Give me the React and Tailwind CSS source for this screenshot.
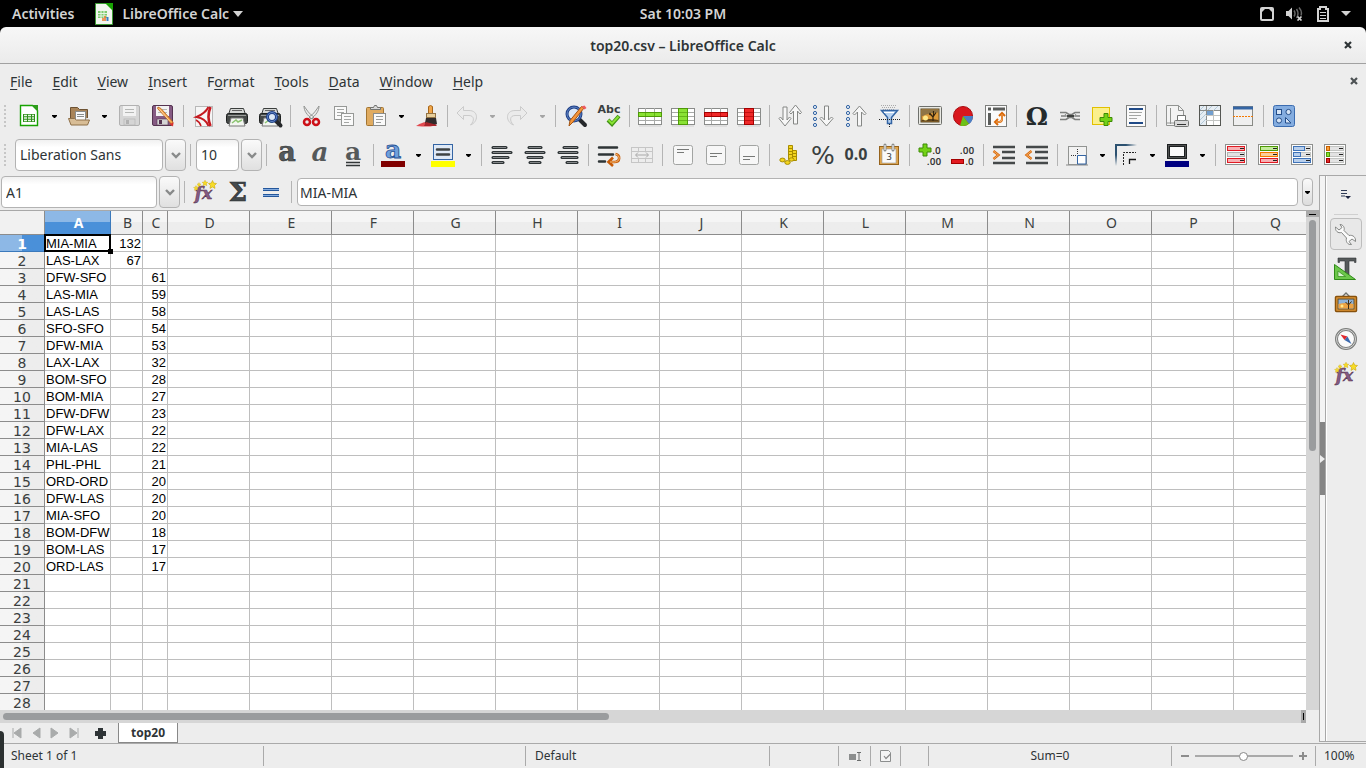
const UI = "font-['Noto_Sans','Open_Sans',sans-serif]";

/* ---------- shared icon parts ---------- */

const Svg = ({ size = 24, children }) => (
  <svg width={size} height={size} viewBox="0 0 24 24" fill="none" aria-hidden="true" className="shrink-0 overflow-visible">
    {children}
  </svg>
);

const Glyph = ({ x = 12, y = 18, s = 18, fill = '#3a3f40', font = 'DejaVu Sans', w = 'bold', ...rest }) => (
  <text x={x} y={y} fontSize={s} fill={fill} fontFamily={font} fontWeight={w} textAnchor="middle" {...rest} />
);

const Grid = ({ band, vertical, dark }) => (
  <Svg>
    <path d="M1 22h22" stroke="#cfcfcf" />
    <rect x=".5" y="4.5" width="23" height="16" fill="#fff" stroke="#8a8c8a" />
    <path d="M1 8.5h22M1 12.5h22M1 16.5h22M7.5 4v16M16.5 4v16" stroke="#a8aaa8" />
    {vertical ? (
      <>
        <rect x="7.5" y="4.5" width="9" height="16" fill={band} stroke={dark} />
        <path d="M8 8.5h8M8 12.5h8M8 16.5h8" stroke={dark} opacity=".6" />
      </>
    ) : (
      <>
        <rect x=".5" y="8.5" width="23" height="4" fill={band} stroke={dark} />
        <path d="M7.5 9v3M16.5 9v3" stroke={dark} opacity=".6" />
      </>
    )}
  </Svg>
);

const Lines = ({ rows }) => (
  <Svg>
    {rows.map(([x1, x2], i) => (
      <g key={i}>
        <path d={`M${x1} ${4.5 + i * 5}H${x2}`} stroke="#2e3436" strokeWidth="3" strokeLinecap="round" />
        <path d={`M${x1} ${4.5 + i * 5}H${x2}`} stroke="#85888a" strokeWidth="1" />
      </g>
    ))}
  </Svg>
);

const VAlign = ({ y }) => (
  <Svg>
    <rect x="2.5" y="2.5" width="19" height="19" rx="2" fill="#f7f7f7" stroke="#a2a4a2" />
    <path d={`M6 ${y}.5h12M6 ${y + 3}.5h7`} stroke="#777977" />
  </Svg>
);

const Dots = () => (
  <g stroke="#3465a4" fill="#e3ecf7">
    {[3, 9, 15, 21].map((cy) => <circle key={cy} cx="4" cy={cy} r="1.6" />)}
  </g>
);

const DownArrow = () => <path d="M13.5 2h4v14l3-3 1.500 1.500-6.500 7.500L9 14.500l1.500-1.500 3 3z" fill="#f7f7f7" stroke="#858785" />;
const UpArrow = () => <path d="M13.5 22h4V8l3 3L22 9.500 15.500 2 9 9.500l1.500 1.500 3-3z" fill="#f7f7f7" stroke="#858785" />;

const Floppy = ({ body, edge }) => (
  <>
    <rect x="1.5" y="1.5" width="20" height="20" rx="1.5" fill={body} stroke={edge} />
    <rect x="5" y="2" width="13" height="10" fill="#f2f2f2" />
    <path d="M7 5.5h9M7 8.5h9" stroke="#b5b7b5" />
    <rect x="6" y="15" width="11" height="6" fill="#d5d5d5" stroke={edge} strokeWidth=".6" />
    <rect x="8" y="16" width="3" height="4" fill={edge} />
  </>
);

const Pencil = () => (
  <>
    <path d="M6.500 4.500 17.500 16.500l3.500 5 1-3.500L10 4.500 7 3z" fill="#f5a04a" stroke="#b8651b" strokeWidth=".8" />
    <path d="m8 4.500 11 13" stroke="#fcd19c" />
    <path d="m18.500 20 3.500 2.500.6-4z" fill="#d93030" />
  </>
);

const Printer = () => (
  <>
    <path d="M5.500 4.500h13l2 6h-17z" fill="#d6d8d6" stroke="#3b3e3d" />
    <path d="M7 6.500h10" stroke="#666" />
    <rect x="1.500" y="9.500" width="21" height="10" rx="2" fill="#454947" stroke="#1e2120" />
    <path d="M3 11.500h18" stroke="#9b9d9b" />
    <path d="M6 14h12l2 8H4z" fill="#f3f6f1" stroke="#777" />
    <path d="m7 19 4-3 2 2 4-2" stroke="#8bc470" strokeWidth="1.500" />
  </>
);

const Lens = ({ x = 11, y = 10, r = 6 }) => (
  <>
    <path d={`m${x + r - 2} ${y + r - 2} 6 6`} stroke="#26282b" strokeWidth="4" strokeLinecap="round" />
    <circle cx={x} cy={y} r={r} fill="#dce8f6" stroke="#1e3f86" strokeWidth="3" />
    <circle cx={x} cy={y} r={r} stroke="#6286c6" strokeWidth="1" />
  </>
);

const Star = ({ x, y, s = 1 }) => (
  <path
    transform={`translate(${x} ${y}) scale(${s})`}
    d="m0-4 1.200 2.600 2.800.4-2 2 .5 2.900L0 2.500-2.500 3.900-2 1l-2-2 2.800-.4z"
    fill="#f7dc28"
    stroke="#c9a50c"
    strokeWidth=".6"
  />
);

const UndoShape = () => (
  <path d="M8.500 2.500 2 9l6.500 6.500v-4H14c5 0 6 5 1.500 9.500 8-3 8.500-14.500-1.500-14.500H8.500z" fill="#ebebeb" stroke="#cbcbcb" />
);

const Plus = ({ x, y, s = 1 }) => (
  <path transform={`translate(${x} ${y}) scale(${s})`} d="M4.500.5h4v4h4v4h-4v4h-4v-4h-4v-4h4z" fill="#73d216" stroke="#3d8a06" />
);

const Cond = ({ bars }) => (
  <Svg>
    <rect x="1.500" y="1.500" width="21" height="20" fill="#fdfdfd" stroke="#8e908e" />
    {bars.map(([stroke, fill, w], i) => (
      <g key={i}>
        <rect x="3.500" y={3.5 + i * 6} width="17" height="4" fill="#e3e3e3" stroke="#c2c4c2" />
        <rect x="3.500" y={3.5 + i * 6} width={w} height="4" fill={fill} stroke={stroke} />
        <path d={`M16 ${5.5 + i * 6}h4`} stroke="#222" />
      </g>
    ))}
  </Svg>
);

/* ---------- icons ---------- */

const icons = {
  new: (
    <Svg>
      <path d="M3.500 1.500h12l5 5v15h-17z" fill="#fff" stroke="#18a303" strokeWidth="1.400" />
      <path d="M15 1h6v6.500z" fill="#2e9c1c" />
      <rect x="6" y="10" width="12" height="8" fill="#2f8f1b" />
      <path d="M7 11.500h3m1 0h3m1 0h2M7 14h3m1 0h3m1 0h2M7 16.500h3m1 0h3m1 0h2" stroke="#e6f7e2" strokeWidth="1.300" />
    </Svg>
  ),
  open: (
    <Svg>
      <path d="M3.500 18V3.500h7l2 2h8V14" fill="#a98458" stroke="#6d5233" />
      <rect x="8.500" y="7.500" width="10" height="9" fill="#fafafa" stroke="#8b8d8b" />
      <path d="M10 10.500h7M10 12.500h7" stroke="#8b8d8b" />
      <path d="M1.500 14.500h6l2 1.500h13l-2 5H4z" fill="#d8bd96" stroke="#8f7049" />
    </Svg>
  ),
  save: <Svg><Floppy body="#d6d6d6" edge="#b1b1b1" /></Svg>,
  edit: <Svg><Floppy body="#855a83" edge="#553451" /><Pencil /></Svg>,
  pdf: (
    <Svg>
      <rect x="3.500" y="2.500" width="17" height="20" fill="#f6f6f6" stroke="#b8b8b8" />
      <path d="M16.500 3c-2.500 5-6 7.500-12 10 6 1 10 3.500 12 9" stroke="#c51a20" strokeWidth="2" />
      <path d="M18.500 3c-2.500 6-2.500 13 0 19" stroke="#c51a20" strokeWidth="2.600" />
      <path d="M9 22c-1-3-3-5-5-6" stroke="#c51a20" strokeWidth="1.500" />
    </Svg>
  ),
  print: <Svg><Printer /></Svg>,
  preview: <Svg><Printer /><Lens x={14} y={13} r={4.5} /></Svg>,
  cut: (
    <Svg>
      <path d="M5 2c0 5 3 9 8 13l2-2C10 10 8 6 5 2zM20 2c0 5-3 9-8 13l-2-2c5-3 7-7 10-11z" fill="#e8e8e8" stroke="#8b8d8b" strokeWidth=".9" />
      <circle cx="8" cy="18" r="3" stroke="#cc1018" strokeWidth="2.500" />
      <circle cx="17" cy="18" r="3" stroke="#cc1018" strokeWidth="2.500" />
    </Svg>
  ),
  copy: (
    <Svg>
      <rect x="2.500" y="2.500" width="12" height="13" fill="#fafafa" stroke="#969896" />
      <path d="M5 5.500h7M5 8.500h7M5 11.500h5" stroke="#a4a6a4" />
      <rect x="9.500" y="9.500" width="12" height="12" fill="#fafafa" stroke="#969896" />
      <path d="M12 12.500h7M12 15.500h7M12 18.500h5" stroke="#a4a6a4" />
    </Svg>
  ),
  paste: (
    <Svg>
      <rect x="2.500" y="3.500" width="17" height="18" rx="1" fill="#e0ab60" stroke="#a37532" />
      <path d="M6.500 5.500v-2h3l1-2h2l1 2h3v2z" fill="#d9d9d9" stroke="#717371" />
      <rect x="9.500" y="9.500" width="12" height="12" fill="#fafafa" stroke="#8b8d8b" />
      <path d="M12 12.500h7M12 15.500h7M12 18.500h5" stroke="#9b9d9b" />
    </Svg>
  ),
  brush: (
    <Svg>
      <path d="M1 22c5-3 8-4 10-4l10 2c-2 3-8 3-20 2z" fill="#e14a50" />
      <path d="M13.500 2.500q2-2 4 0V10h-4z" fill="#f0a64a" stroke="#a6661b" />
      <rect x="11.500" y="9.500" width="9" height="4" fill="#e8cf9c" stroke="#927346" />
      <path d="M11 14h10l1 6c-4 2-9 2-12-1z" fill="#312c2c" />
      <path d="m11 18 11 3-1 1H9z" fill="#a8242a" />
    </Svg>
  ),
  undo: <Svg><UndoShape /></Svg>,
  redo: <Svg><g transform="matrix(-1 0 0 1 24 0)"><UndoShape /></g></Svg>,
  find: (
    <Svg>
      <Lens x={10} y={10} r={7} />
      <path d="M20 4 9 18l-4 4 1-5.500L17.500 2.500z" fill="#f5953a" stroke="#a35412" />
      <path d="m17.500 2.500 3-1 2 2.500-2 1.500z" fill="#ee5b62" />
    </Svg>
  ),
  spell: (
    <Svg>
      <Glyph x={12} y={9} s={11}>Abc</Glyph>
      <path d="m11 16 4 4 7-8" stroke="#3f9113" strokeWidth="4" />
      <path d="m11.500 16 3.500 3.500 6.500-7" stroke="#8ae234" strokeWidth="2" />
    </Svg>
  ),
  rowIns: <Grid band="#8ae234" dark="#4e9a06" />,
  colIns: <Grid band="#8ae234" dark="#4e9a06" vertical />,
  rowDel: <Grid band="#ef2929" dark="#a40000" />,
  colDel: <Grid band="#ef2929" dark="#a40000" vertical />,
  sort: (
    <Svg>
      <path d="M5 3h4v13l2.500-3 1.500 1.500L7 22l-6-7.500L2.500 13 5 16z" fill="#f7f7f7" stroke="#858785" />
      <path d="M15.500 20h4V7l2.500 3 1.500-1.500L17.500 1l-6 7.500L13 10l2.500-3z" fill="#f7f7f7" stroke="#858785" />
    </Svg>
  ),
  sortDown: <Svg><Dots /><DownArrow /></Svg>,
  sortUp: <Svg><Dots /><UpArrow /></Svg>,
  filter: (
    <Svg>
      <path d="M4 1.500h16M5 3.500h14M6 5.500h12" stroke="#aaa" strokeDasharray="1 1" />
      <path d="M4.500 6.500h16l-6 7v6h-4v-6z" fill="#b9d3f1" stroke="#3465a4" strokeWidth="1.500" />
      <path d="M7 8.500h10" stroke="#fff" />
      <path d="M2 15.500h21M12.500 20v4" stroke="#222" strokeDasharray="1 1" />
    </Svg>
  ),
  image: (
    <Svg>
      <rect x=".5" y="2.500" width="23" height="18" rx="1" fill="#e9e9e3" stroke="#6e706c" />
      <rect x="3" y="5" width="18" height="13" fill="#dd9a3a" stroke="#5b4a2a" />
      <path d="M3.500 5.500h17v3q-9 0-17 4z" fill="#8f7446" />
      <path d="M3.500 16q8-2 17 0v1.500h-17z" fill="#5c421c" />
      <circle cx="7.500" cy="14" r="2.500" fill="#ffe88a" />
      <path d="M15 17v-4l-3.500-4M15 13l3-4.500M15.500 12V7M13 11l-2-1" stroke="#33240f" strokeWidth="1.200" />
    </Svg>
  ),
  chart: (
    <Svg>
      <circle cx="12" cy="12" r="9.500" fill="#d9171d" stroke="#a80c10" />
      <path d="M12 12h10a10 10 0 0 1-4 8z" fill="#4a7fc4" />
      <path d="m12 12 6 8a10 10 0 0 1-9 1.500z" fill="#6cc118" />
    </Svg>
  ),
  pivot: (
    <Svg>
      <rect x="1.500" y="1.500" width="21" height="21" fill="#fafafa" stroke="#7c7e7c" />
      <path d="M4 5h3M9 5h12M5.500 9v12" stroke="#5b5d5b" strokeWidth="3" />
      <path d="M18 9v6q0 3-3 3h-4M15 12l3-3 3 3M14 15l-3 3 3 3" stroke="#d96808" strokeWidth="2" />
      <path d="M18 10v5q0 3-3 3h-3" stroke="#fbc68b" strokeWidth=".7" />
    </Svg>
  ),
  omega: <Svg><Glyph y={21} s={25} fill="#252b2c" font="DejaVu Serif">Ω</Glyph></Svg>,
  link: (
    <Svg>
      <path d="M2 8.500h6l3 2h3l3-2h5M2 15.500h6l3-2h3l3 2h5M3 12h5M17 12h5" stroke="#7d7f7d" strokeWidth="1.600" />
      <path d="m7 10 3 4m8-4-3 4" stroke="#8b8d8b" />
      <path d="M9 12h7" stroke="#3f413f" strokeWidth="2" />
    </Svg>
  ),
  note: (
    <Svg>
      <rect x="1.500" y="3.500" width="17" height="17" fill="#fbf08c" stroke="#e2c000" />
      <Plus x={8.5} y={9} />
    </Svg>
  ),
  header: (
    <Svg>
      <rect x="2.500" y="1.500" width="19" height="21" fill="#fafafa" stroke="#828482" />
      <path d="M5 5h14M5 19h14" stroke="#204a87" strokeWidth="2" />
      <path d="M5 8.500h13M5 11.500h12M5 14.500h8" stroke="#a4a6a4" />
    </Svg>
  ),
  pages: (
    <Svg>
      <path d="M1.500 1.500h12l5 5v15h-17z" fill="#f3f3f3" stroke="#929492" />
      <path d="M13.500 1.500v5h5M5.500 4v16M2 19h12" stroke="#929492" />
      <path d="M12.500 11.500h8v5h-8z" fill="#fff" stroke="#727472" />
      <rect x="9.500" y="16.500" width="14" height="6" rx="1" fill="#d8d8d8" stroke="#727472" />
      <path d="M12 20.500h9" stroke="#333" />
    </Svg>
  ),
  freeze: (
    <Svg>
      <rect x="1.500" y="1.500" width="21" height="20" fill="#fff" stroke="#555753" />
      <path d="M2 2h20v4H8v15H2z" fill="#e6edf3" />
      <path d="m2 6 4-4M2 11l6-6M2 16l6-6M2 21l6-6M10 6l4-4M16 6l4-4" stroke="#b3c9d8" />
      <path d="M2 6.500h20M8.500 2v19" stroke="#8b8d8b" />
      <path d="M15.500 6v15M8 11.500h14M8 16.500h14" stroke="#c2c4c2" />
      <rect x="9" y="7" width="6" height="4" fill="#729fcf" />
      <rect x="1.500" y="1.500" width="21" height="20" stroke="#555753" />
    </Svg>
  ),
  split: (
    <Svg>
      <rect x="2.500" y="2.500" width="19" height="19" fill="#efefef" stroke="#888a85" />
      <path d="M2 4h20" stroke="#3465a4" strokeWidth="3" />
      <path d="M2 12.500h20" stroke="#f57900" strokeDasharray="2 1" />
    </Svg>
  ),
  shapes: (
    <Svg>
      <rect x="1.500" y="1.500" width="21" height="21" rx="2" fill="#84ade0" stroke="#3b6cb0" />
      <g fill="#d5e4f6" stroke="#244e8a">
        <rect x="4.500" y="5.500" width="5" height="5" />
        <circle cx="16.500" cy="8" r="2.600" />
        <circle cx="7" cy="16.500" r="2.600" />
        <path d="M13.500 13.500v5.500h5.500z" />
      </g>
    </Svg>
  ),
  bold: <Svg><Glyph x={12} y={18} s={27} fill="#55595a" stroke="#333738" strokeWidth=".6" font="DejaVu Serif">a</Glyph></Svg>,
  italic: <Svg><Glyph x={12} y={18} s={26} fill="#55595a" font="DejaVu Serif" fontStyle="italic">a</Glyph></Svg>,
  underline: (
    <Svg>
      <Glyph x={12} y={17} s={25} fill="#55595a" font="DejaVu Serif">a</Glyph>
      <path d="M5 19.500h14M5 22.500h14" stroke="#333738" strokeWidth="1.500" />
    </Svg>
  ),
  fontColor: (
    <Svg>
      <Glyph x={12} y={15} s={25} fill="#6f9fdc" stroke="#1f4f93" strokeWidth=".8" font="DejaVu Serif">a</Glyph>
      <path d="M0 18h24v6H0z" fill="#800000" />
    </Svg>
  ),
  highlight: (
    <Svg>
      <rect x="2.500" y="1.500" width="19" height="15" fill="#dfe9f6" stroke="#3465a4" />
      <path d="M6 6.500h12M6 11.500h12" stroke="#3e4243" strokeWidth="2.500" strokeLinecap="round" />
      <path d="M0 18h24v6H0z" fill="#ffff00" />
    </Svg>
  ),
  left: <Lines rows={[[3, 16], [3, 21], [3, 18], [3, 13]]} />,
  center: <Lines rows={[[6, 18], [3, 21], [5, 19], [7, 17]]} />,
  right: <Lines rows={[[8, 21], [3, 21], [6, 21], [11, 21]]} />,
  wrap: (
    <Svg>
      <path d="M2 4.500h18M2 11.500h14M2 18.500h6" stroke="#2e3436" strokeWidth="2.500" strokeLinecap="round" />
      <path d="M18.500 11c5 1 5 8-1 8H12m4-4.500L11.500 19l4.500 4" stroke="#c65a06" strokeWidth="2.600" />
      <path d="M18.500 11c5 1 5 8-1 8H13" stroke="#fcc27e" />
    </Svg>
  ),
  merge: (
    <Svg>
      <rect x="1.500" y="4.500" width="21" height="15" fill="#ededed" stroke="#c6c6c6" />
      <path d="M2 8.500h20M2 15.500h20M8.500 5v4M15.500 5v4M8.500 15v4M15.500 15v4" stroke="#c6c6c6" />
      <path d="M6 12h12M8 9.500 5.500 12 8 14.500M16 9.500l2.500 2.500-2.500 2.500" stroke="#a9a9a9" />
    </Svg>
  ),
  vTop: <VAlign y={6} />,
  vMid: <VAlign y={10} />,
  vBot: <VAlign y={13} />,
  coins: (
    <Svg>
      <path d="M10.500 2.500h4v14h-4zM14.500 7.500h4v10h-4z" fill="#f3d51f" stroke="#a88d00" />
      <path d="M11 5.500h3M11 8.500h3M11 11.500h3M15 10.500h3M15 13.500h3" stroke="#a88d00" />
      <g fill="#f3d51f" stroke="#a88d00">
        <ellipse cx="4.500" cy="17" rx="2.700" ry="1.900" />
        <ellipse cx="9.500" cy="19.500" rx="2.700" ry="1.900" />
        <ellipse cx="13.500" cy="16.500" rx="2.500" ry="1.700" />
      </g>
    </Svg>
  ),
  percent: <Svg><Glyph y={21} s={25} w="normal">%</Glyph></Svg>,
  number: <Svg><Glyph y={17} s={16} font="Noto Sans">0.0</Glyph></Svg>,
  date: (
    <Svg>
      <rect x="2.500" y="3.500" width="19" height="18" fill="#e0a64c" stroke="#96631c" />
      <rect x="5" y="6" width="14" height="14" fill="#fafafa" stroke="#999" strokeWidth=".6" />
      <Glyph y={17} s={9} w="normal">3</Glyph>
      <path d="M8 2v5M16 2v5" stroke="#8b8d8b" strokeWidth="3" strokeLinecap="round" />
      <path d="M8 2v5M16 2v5" stroke="#fff" />
    </Svg>
  ),
  addDec: (
    <Svg>
      <Plus x={0.5} y={0.5} />
      <Glyph x={18.5} y={11} s={9} w="normal" fill="#222" stroke="#222" strokeWidth=".2">.0</Glyph>
      <Glyph x={16} y={22} s={9} w="normal" fill="#222" stroke="#222" strokeWidth=".2">.00</Glyph>
    </Svg>
  ),
  delDec: (
    <Svg>
      <Glyph x={16} y={11} s={9} w="normal" fill="#222" stroke="#222" strokeWidth=".2">.00</Glyph>
      <rect x=".5" y="16.500" width="12" height="4" fill="#e31a20" stroke="#a40000" />
      <Glyph x={18.5} y={22} s={9} w="normal" fill="#222" stroke="#222" strokeWidth=".2">.0</Glyph>
    </Svg>
  ),
  indentMore: (
    <Svg>
      <path d="M1 4h22M10 9h13M10 15h13M1 20h22" stroke="#45494a" strokeWidth="2.400" />
      <path d="m1.500 8 5 4-5 4" stroke="#d96808" strokeWidth="2.400" />
      <path d="m1.500 8 5 4-5 4" stroke="#fbc68b" strokeWidth=".7" />
    </Svg>
  ),
  indentLess: (
    <Svg>
      <path d="M1 4h22M10 9h13M10 15h13M1 20h22" stroke="#45494a" strokeWidth="2.400" />
      <path d="m6.500 8-5 4 5 4" stroke="#d96808" strokeWidth="2.400" />
      <path d="m6.500 8-5 4 5 4" stroke="#fbc68b" strokeWidth=".7" />
    </Svg>
  ),
  borders: (
    <Svg>
      <path d="M1 22h22" stroke="#bbb" strokeWidth="2" />
      <rect x="3.500" y="3.500" width="18" height="18" fill="#f2f2f2" stroke="#929492" />
      <path d="M6 12.500h6M12.500 6v6" stroke="#333" strokeDasharray="1 1" />
      <path d="M12.500 21v-8.500H21v8.500z" fill="#fff" stroke="#3465a4" />
    </Svg>
  ),
  lineStyle: (
    <Svg>
      <defs>
        <linearGradient id="fadeX"><stop offset=".5" stopColor="#2c5170" /><stop offset="1" stopColor="#2c5170" stopOpacity="0" /></linearGradient>
        <linearGradient id="fadeY" x2="0" y2="1"><stop offset=".5" stopColor="#2c5170" /><stop offset="1" stopColor="#2c5170" stopOpacity="0" /></linearGradient>
      </defs>
      <rect x="0" y="1" width="22" height="2" fill="url(#fadeX)" />
      <rect x="0" y="1" width="2" height="22" fill="url(#fadeY)" />
      <path d="M8.500 22V9.500H21" stroke="#222" strokeDasharray="2 1" />
      <path d="M14.500 21v-4.500H21" stroke="#111" strokeWidth="1.300" />
    </Svg>
  ),
  lineColor: (
    <Svg>
      <rect x="3.500" y="2.500" width="17" height="12" fill="#fafafa" stroke="#1c1f20" strokeWidth="3" />
      <rect x="3.500" y="2.500" width="17" height="12" stroke="#666" strokeWidth=".7" />
      <path d="M0 18h24v6H0z" fill="#000080" />
    </Svg>
  ),
  cond1: <Cond bars={[['#e01b24', '#f7b0b3', 17], ['#b2b4b2', '#e3e3e3', 17], ['#e01b24', '#f7b0b3', 17]]} />,
  cond2: <Cond bars={[['#4e9a06', '#c3eb9a', 17], ['#f57900', '#fbcf9c', 17], ['#e01b24', '#f7b0b3', 17]]} />,
  cond3: <Cond bars={[['#3f73b8', '#b8cfec', 11], ['#3f73b8', '#b8cfec', 7], ['#3f73b8', '#b8cfec', 17]]} />,
  cond4: <Cond bars={[['#c86000', '#f9a13a', 3], ['#4e9a06', '#8ae234', 3], ['#a40000', '#e22a2a', 3]]} />,
  fx: (
    <Svg>
      <Glyph x={10.5} y={19} s={17} fill="#855a83" stroke="#56324f" strokeWidth=".5" font="DejaVu Serif" fontStyle="italic">fx</Glyph>
      <Star x={19.5} y={4.5} />
      <Star x={12} y={3} s={0.7} />
      <Star x={6} y={4.5} s={0.5} />
      <Star x={3} y={8} s={0.6} />
    </Svg>
  ),
  sigma: <Svg><Glyph y={21} s={26} fill="#454a4c" stroke="#24292a" strokeWidth=".6" font="DejaVu Serif">Σ</Glyph></Svg>,
  equals: (
    <Svg>
      <path d="M4 9.500h16M4 15.500h16" stroke="#24579b" strokeWidth="3" />
      <path d="M4 9.500h16M4 15.500h16" stroke="#83abdf" />
    </Svg>
  ),
  wrench: (
    <Svg>
      <path
        d="M6 2.500c3 0 5 3 4 6l5 5c4-1 7 2 6.500 6L18 17l-3 2.500 2.500 3c-4 .5-6-3-5-6.500L7.500 10.500C4 11.500 1 9 1.500 5L5 8l3-2.500z"
        fill="#fbfbfb"
        stroke="#858785"
      />
    </Svg>
  ),
  styles: (
    <Svg>
      <path d="M4 1h18v4.500h-1.500V4H15v14h-4V4H5.500v1.500H4z" fill="#565a5b" stroke="#303435" strokeWidth=".6" />
      <path d="M.5 7.500v15h21z" fill="#6cc74a" stroke="#2f8a17" />
      <path d="M4 14v5.500h7.500z" fill="#d9f3cf" stroke="#2f8a17" strokeWidth=".7" />
    </Svg>
  ),
  gallery: (
    <Svg>
      <path d="m8 5 4-4 4 4" stroke="#6e706c" strokeWidth="1.300" />
      <rect x="1.500" y="4.500" width="21" height="15" rx="1" fill="#e59834" stroke="#87510c" strokeWidth="1.500" />
      <rect x="4" y="7" width="16" height="10" fill="#8fb3d8" stroke="#5b4a2a" />
      <path d="M4.500 12q7-2 15 0v4.500h-15z" fill="#eda343" />
      <circle cx="8" cy="14" r="1.500" fill="#ffe88a" />
      <path d="M14.500 17v-4l-3-3m3 3 3-3.500m-3 2.500V8" stroke="#3c2b14" />
    </Svg>
  ),
  compass: (
    <Svg>
      <circle cx="12" cy="12" r="9.500" fill="#fafafa" stroke="#7c7e7c" strokeWidth="3" />
      <circle cx="12" cy="12" r="9.500" stroke="#d5d5d5" />
      <path d="m6.500 7.500 7 2-3 3.500z" fill="#e0272c" />
      <path d="m17.500 17-4-7.500-3 3.500z" fill="#3b69ad" />
    </Svg>
  ),
};

/* ---------- toolbar pieces ---------- */

const Arrow = ({ dim }) => (
  <svg width="5" height="3" viewBox="0 0 5 3" aria-hidden="true" className={dim ? 'fill-[#a5a5a5]' : 'fill-black'}>
    <path d="M0 0h5v1L3 3H2L0 1z" />
  </svg>
);

const Chevron = () => (
  <svg width="10" height="7" viewBox="0 0 10 7" fill="none" aria-hidden="true">
    <path d="m1 1 4 4 4-4" stroke="#888a8a" strokeWidth="2.400" />
  </svg>
);

const Sep = () => (
  <div className="w-2 shrink-0 flex justify-center" aria-hidden="true">
    <div className="w-px h-[22px] bg-[#b4b4b4]" />
  </div>
);

const Grip = () => (
  <div className="w-[13px] shrink-0 pl-1 flex flex-col gap-[2px]" aria-hidden="true">
    {[0, 1, 2, 3, 4, 5].map((i) => <span key={i} className="size-[2px] bg-[#c6c6c6]" />)}
  </div>
);

// names starting with + carry a drop-down arrow, | is a separator
function Tools({ items }) {
  return items.map((item, i) => {
    if (item === '|') return <Sep key={i} />;
    const drop = item[0] === '+';
    const name = drop ? item.slice(1) : item;
    return (
      <button
        key={i}
        type="button"
        aria-label={name}
        className={drop ? 'w-[50px] h-8 shrink-0 flex items-center pl-1 gap-[11px]' : 'w-[33px] h-8 shrink-0 flex items-center pl-[5px]'}
      >
        {icons[name]}
        {drop && <Arrow dim={name === 'undo' || name === 'redo'} />}
      </button>
    );
  });
}

const field = 'h-8 rounded border border-[#b3b3b3] bg-linear-to-b from-[#f1f1f1] to-white to-25% text-sm text-[#2e3436] outline-none';

const DropButton = ({ label }) => (
  <button type="button" aria-label={label} className="w-[21px] h-8 rounded border border-[#b3b3b3] bg-linear-to-b from-[#fafafa] to-[#e0e0e0] flex items-center justify-center">
    <Chevron />
  </button>
);

const standard = ['+new', '+open', 'save', 'edit', '|', 'pdf', 'print', 'preview', '|', 'cut', 'copy', '+paste', 'brush', '|', '+undo', '+redo', '|', 'find', 'spell', '|', 'rowIns', 'colIns', 'rowDel', 'colDel', '|', 'sort', 'sortDown', 'sortUp', 'filter', '|', 'image', 'chart', 'pivot', '|', 'omega', 'link', 'note', 'header', '|', 'pages', 'freeze', 'split', '|', 'shapes'];
const formatting = ['bold', 'italic', 'underline', '|', '+fontColor', '+highlight', '|', 'left', 'center', 'right', '|', 'wrap', 'merge', '|', 'vTop', 'vMid', 'vBot', '|', 'coins', 'percent', 'number', 'date', '|', 'addDec', 'delDec', '|', 'indentMore', 'indentLess', '|', '+borders', '+lineStyle', '+lineColor', '|', 'cond1', 'cond2', 'cond3', 'cond4'];

/* ---------- window chrome ---------- */

function TopBar() {
  return (
    <header className="h-[27px] shrink-0 bg-black text-[#d3d3d3] text-sm font-semibold grid grid-cols-3 items-center">
      <div className="flex items-center pl-3">
        <button type="button" className="mr-5">Activities</button>
        <button type="button" className="flex items-center gap-2">
          <svg width="20" height="24" viewBox="0 0 20 24" aria-hidden="true">
            <path d="M1.500 1.500h11l6 6v15h-17z" fill="#f2f6ef" stroke="#3d9b35" />
            <path d="M11 1h8v8z" fill="#18a303" />
            <path d="M4 9h9v7H4z" fill="#7fcb70" />
            <path d="M4 11.500h9M4 14h9M7 9v7M10 9v7" stroke="#e5f5e1" />
            <path d="M9 19v-3M11 19v-5" stroke="#e8762d" strokeWidth="1.500" />
            <path d="M13.500 19v-4" stroke="#3b7fc4" strokeWidth="2" />
          </svg>
          <span className="flex items-center gap-1">
            LibreOffice Calc
            <svg width="10" height="6" viewBox="0 0 10 6" className="fill-[#d3d3d3]" aria-hidden="true"><path d="M0 0h10L5 6z" /></svg>
          </span>
        </button>
      </div>
      <div className="text-center">Sat 10:03 PM</div>
      <div className="flex items-center justify-end gap-3 pr-[15px]">
        <svg width="14" height="14" viewBox="0 0 14 14" fill="none" aria-hidden="true">
          <rect x="1" y="1" width="12" height="12" rx="1" stroke="#d3d3d3" strokeWidth="2" />
          <path d="M2 2h3L2 5zM12 2v3L9 2z" fill="#d3d3d3" />
        </svg>
        <svg width="17" height="15" viewBox="0 0 17 15" fill="none" aria-hidden="true">
          <path d="M0 5h2.500L6 1.500v12L2.500 10H0z" fill="#d3d3d3" />
          <path d="M8 4.500q2 3 0 6M10.500 3q3 4.500 0 9M13 1.500q3.500 4 2 8" stroke="#666" strokeWidth="1.500" />
          <path d="m11.500 10.500 4 4m0-4-4 4" stroke="#d3d3d3" strokeWidth="1.700" />
        </svg>
        <svg width="12" height="16" viewBox="0 0 12 16" fill="none" aria-hidden="true" className="ml-[2px]">
          <path d="M1 3h2V1h6v2h2v12H1z" stroke="#d3d3d3" strokeWidth="2" />
          <path d="M3 6.500h6M3 9.500h6M3 12.500h6" stroke="#d3d3d3" />
        </svg>
        <svg width="10" height="5" viewBox="0 0 10 5" className="fill-[#d3d3d3]" aria-hidden="true"><path d="M0 0h10L5 5z" /></svg>
      </div>
    </header>
  );
}

const Close = ({ color }) => (
  <svg width="8" height="8" viewBox="0 0 8 8" fill="none" aria-hidden="true">
    <path d="m1 1 6 6m0-6-6 6" stroke={color} strokeWidth="2.200" />
  </svg>
);

function TitleBar() {
  return (
    <div className="bg-black shrink-0">
      <div className="h-[37px] rounded-t-md bg-linear-to-b from-[#f7f7f7] to-[#ebebeb] border-b border-[#a1a1a1] grid grid-cols-[1fr_auto_1fr] items-center">
        <span />
        <h1 className="pt-[2px] text-sm font-semibold text-[#2e3436]">top20.csv – LibreOffice Calc</h1>
        <button type="button" aria-label="Close window" className="justify-self-end mr-[14px]"><Close color="#2e3436" /></button>
      </div>
    </div>
  );
}

const menus = [['', 'F', 'ile'], ['', 'E', 'dit'], ['', 'V', 'iew'], ['', 'I', 'nsert'], ['F', 'o', 'rmat'], ['', 'T', 'ools'], ['', 'D', 'ata'], ['', 'W', 'indow'], ['', 'H', 'elp']];

function MenuBar() {
  return (
    <nav className="h-[33px] shrink-0 flex items-center justify-between pl-[10px] pr-2">
      <div className="flex gap-5 pt-[2px] text-sm text-[#2e3436]">
        {menus.map(([pre, key, post]) => (
          <button key={key + post} type="button">
            {pre}<span className="underline underline-offset-2">{key}</span>{post}
          </button>
        ))}
      </div>
      <button type="button" aria-label="Close document"><Close color="#4d5254" /></button>
    </nav>
  );
}

function FormulaBar() {
  return (
    <div className="h-[34px] mb-px shrink-0 flex items-center pl-px pr-[6px]">
      <input aria-label="Name Box" defaultValue="A1" className={`${field} w-[156px] px-1`} />
      <div className="ml-[2px]"><DropButton label="Name Box list" /></div>
      <Sep />
      <Tools items={['fx', 'sigma', 'equals', '|']} />
      <input aria-label="Input line" defaultValue="MIA-MIA" className="ml-[2px] flex-1 min-w-0 h-7 rounded border border-[#b3b3b3] bg-white px-[2px] text-sm text-[#2e3436] outline-none" />
      <button type="button" aria-label="Expand formula bar" className="ml-1 w-[11px] h-7 rounded border border-[#b3b3b3] bg-linear-to-b from-[#fafafa] to-[#dcdcdc] flex items-center justify-center">
        <Arrow />
      </button>
    </div>
  );
}

/* ---------- sheet ---------- */

const data = [
  ['MIA-MIA', 132, ''], ['LAS-LAX', 67, ''], ['DFW-SFO', '', 61], ['LAS-MIA', '', 59], ['LAS-LAS', '', 58],
  ['SFO-SFO', '', 54], ['DFW-MIA', '', 53], ['LAX-LAX', '', 32], ['BOM-SFO', '', 28], ['BOM-MIA', '', 27],
  ['DFW-DFW', '', 23], ['DFW-LAX', '', 22], ['MIA-LAS', '', 22], ['PHL-PHL', '', 21], ['ORD-ORD', '', 20],
  ['DFW-LAS', '', 20], ['MIA-SFO', '', 20], ['BOM-DFW', '', 18], ['BOM-LAS', '', 17], ['ORD-LAS', '', 17],
];
const letters = 'ABCDEFGHIJKLMNOPQ'.split('');
const colWidth = (i) => (i === 0 ? 'w-[66px]' : i === 1 ? 'w-8' : i === 2 ? 'w-[25px]' : 'w-[82px]');
const rows = Array.from({ length: 28 }, (_, i) => data[i] || []);

function Sheet() {
  return (
    <div className="flex-1 min-w-0 overflow-hidden bg-white">
      <table className="table-fixed w-[1316px] border-separate border-spacing-0">
        <colgroup>
          <col className="w-[45px]" />
          {letters.map((l, i) => <col key={l} className={colWidth(i)} />)}
        </colgroup>
        <thead>
          <tr className="h-6 text-sm leading-5">
            <th aria-label="Select all" className="p-0 border-r border-b border-[#8c8c8c] bg-[#f1f1f1]" />
            {letters.map((l, i) => (
              <th
                key={l}
                className={i === 0
                  ? 'p-0 pl-[2px] font-bold text-white border-r border-b border-[#3b79bb] bg-linear-to-b from-[#8db8e6] from-50% to-[#4a90d9] to-50%'
                  : 'p-0 pl-[2px] font-normal text-[#3b3f40] border-r border-b border-[#8c8c8c] bg-linear-to-b from-[#f5f5f5] from-50% to-[#ededed] to-50%'}
              >
                {l}
              </th>
            ))}
          </tr>
        </thead>
        <tbody>
          {rows.map((row, r) => (
            <tr key={r} className="h-[17px] text-sm leading-[14px]">
              <th
                className={r === 0
                  ? "p-0 pt-[2px] font-['DejaVu_Sans',sans-serif] font-bold text-white border-r border-b border-[#3b79bb] bg-linear-to-r from-[#8db8e6] from-50% to-[#4a90d9] to-50%"
                  : "p-0 pt-[2px] font-['DejaVu_Sans',sans-serif] font-normal text-[#3b3f40] border-r border-b border-[#8c8c8c] bg-linear-to-r from-[#f5f5f5] from-50% to-[#ededed] to-50%"}
              >
                {r + 1}
              </th>
              {letters.map((l, c) => (
                <td
                  key={l}
                  className={`relative p-0 pt-[2px] px-px border-r border-b border-[#bebebe] font-['Liberation_Sans',Arial,sans-serif] text-[13px] leading-[14px] text-black whitespace-nowrap ${c > 0 ? 'text-right' : ''}`}
                >
                  {row[c]}
                  {r === 0 && c === 0 && (
                    <span className="absolute z-10 -inset-px border-2 border-black">
                      <span className="absolute -right-1 -bottom-1 size-[5px] bg-black" />
                    </span>
                  )}
                </td>
              ))}
            </tr>
          ))}
        </tbody>
      </table>
    </div>
  );
}

function SheetTabs() {
  return (
    <div className="h-5 shrink-0 flex items-start pl-[7px]">
      {['M4 1v10M12 1v10L5 6z', 'M12 1v10L5 6z', 'M4 1v10l7-5z', 'M12 1v10M4 1v10l7-5z'].map((d, i) => (
        <button key={d} type="button" aria-label={['First', 'Previous', 'Next', 'Last'][i] + ' sheet'} className="w-[19px] h-5 flex items-center justify-center">
          <svg width="16" height="12" viewBox="0 0 16 12" className="fill-[#a9abab] stroke-[#a9abab]" aria-hidden="true"><path d={d} /></svg>
        </button>
      ))}
      <button type="button" aria-label="Add sheet" className="w-[35px] h-5 flex items-center justify-center">
        <svg width="11" height="11" viewBox="0 0 11 11" aria-hidden="true"><path d="M3 0h5v3h3v5H8v3H3V8H0V3h3z" fill="#2e3436" /></svg>
      </button>
      <button type="button" className="w-[60px] h-5 border border-t-0 border-[#888] bg-white text-xs font-bold text-[#2e3436]">top20</button>
    </div>
  );
}

function SideBar() {
  return (
    <aside className="w-[47px] shrink-0 mb-px flex border-t border-b border-[#a8a8a8]">
      <div className="w-[7px] flex items-center border-x border-[#a8a8a8] bg-[#f4f4f4]">
        <button type="button" aria-label="Collapse sidebar" className="w-full h-[73px] bg-[#858585] flex items-center justify-center">
          <svg width="5" height="8" viewBox="0 0 5 8" className="fill-[#eee]" aria-hidden="true"><path d="M0 0v8l5-4z" /></svg>
        </button>
      </div>
      <div className="flex-1 flex flex-col items-center pr-[2px] border-l border-white">
        <button type="button" aria-label="Sidebar settings" className="h-[38px] flex items-center">
          <svg width="10" height="10" viewBox="0 0 10 10" fill="none" aria-hidden="true">
            <path d="M0 .5h6M0 3.500h6M0 6h4" stroke="#2e3a55" />
            <path d="M4 6h6L7 9z" fill="#1b2340" />
          </svg>
        </button>
        <div className="w-6 h-px bg-[#d0d0d0] mb-[3px]" />
        <div className="flex flex-col gap-[3px]">
          {['wrench', 'styles', 'gallery', 'compass', 'fx'].map((n, i) => (
            <button key={n} type="button" aria-label={n} className={`size-8 flex items-center justify-center rounded border ${i === 0 ? 'border-[#bdbdbd] bg-[#e8e8e8]' : 'border-transparent'}`}>
              {icons[n]}
            </button>
          ))}
        </div>
      </div>
    </aside>
  );
}

function StatusBar() {
  const cell = 'h-5 border-r border-[#aaa] flex items-center';
  return (
    <footer className="h-[25px] shrink-0 border-t border-[#aaa] flex items-center text-xs text-[#2e3436]">
      <div className={`${cell} w-[264px] pl-[11px]`}>Sheet 1 of 1</div>
      <div className={`${cell} w-[262px]`} />
      <div className={`${cell} w-[244px] pl-[9px]`}>Default</div>
      <div className={`${cell} w-[69px]`} />
      <div className={`${cell} w-8 justify-center`}>
        <svg width="12" height="9" viewBox="0 0 12 9" fill="none" aria-hidden="true">
          <path d="M0 2h7v6H0z" fill="#8c8e8e" />
          <path d="M8 .5h4M8 8.500h4M10 1v7" stroke="#6b6d6d" />
        </svg>
      </div>
      <div className={`${cell} w-[30px] justify-center`}>
        <svg width="12" height="12" viewBox="0 0 12 12" fill="none" aria-hidden="true">
          <path d="M.5.5h8l2 2v9H.5z" fill="#f4f4f4" stroke="#8c8e8e" />
          <path d="m4 6 2 2.500L10.500 4" stroke="#888" strokeWidth="1.200" />
        </svg>
      </div>
      <div className={`${cell} w-7`} />
      <div className={`${cell} flex-1 justify-center`}>Sum=0</div>
      <div className={`${cell} w-36 justify-center gap-[6px]`}>
        <button type="button" aria-label="Zoom out"><svg width="8" height="8" viewBox="0 0 8 8" aria-hidden="true"><path d="M0 3h8v2H0z" fill="#8c8c8c" /></svg></button>
        <input
          type="range"
          aria-label="Zoom"
          defaultValue="50"
          className="w-[98px] h-[2px] appearance-none bg-[#a9a9a9] [&::-webkit-slider-thumb]:appearance-none [&::-webkit-slider-thumb]:size-[9px] [&::-webkit-slider-thumb]:rounded-full [&::-webkit-slider-thumb]:bg-white [&::-webkit-slider-thumb]:border [&::-webkit-slider-thumb]:border-[#888]"
        />
        <button type="button" aria-label="Zoom in"><svg width="8" height="8" viewBox="0 0 8 8" aria-hidden="true"><path d="M3 0h2v3h3v2H5v3H3V5H0V3h3z" fill="#8c8c8c" /></svg></button>
      </div>
      <div className="w-[50px] pl-2">100%</div>
    </footer>
  );
}

export default function App() {
  return (
    <div className={`${UI} relative h-screen flex flex-col overflow-hidden bg-[#ededed]`}>
      <TopBar />
      <TitleBar />
      <MenuBar />
      <div className="h-[38px] shrink-0 flex items-center">
        <Grip />
        <Tools items={standard} />
      </div>
      <div className="h-10 shrink-0 flex items-center">
        <Grip />
        <div className="flex gap-[2px] ml-[2px]">
          <select aria-label="Font Name" className={`${field} appearance-none w-[148px] px-1`}><option>Liberation Sans</option></select>
          <DropButton label="Font Name list" />
        </div>
        <Sep />
        <div className="flex gap-[2px] ml-[2px]">
          <select aria-label="Font Size" className={`${field} appearance-none w-[43px] px-1`}><option>10</option></select>
          <DropButton label="Font Size list" />
        </div>
        <Sep />
        <Tools items={formatting} />
      </div>
      <div className="flex-1 min-h-0 flex">
        <main className="flex-1 min-w-0 flex flex-col">
          <FormulaBar />
          <div className="flex-1 min-h-0 flex border-t border-[#a8a8a8]">
            <Sheet />
            <div className="w-[13px] shrink-0 bg-[#d6d6d6] flex flex-col items-center">
              <div className="w-full h-[6px] bg-[#a9a9a9] flex items-center justify-center"><span className="w-[7px] h-px bg-black" /></div>
              <div className="w-[7px] h-[231px] mt-[3px] rounded-full bg-[#9a9c9e]" />
            </div>
          </div>
          <div className="h-[13px] shrink-0 mr-[13px] bg-[#d6d6d6] flex items-center justify-between pl-[3px]">
            <div className="w-[606px] h-[7px] rounded-full bg-[#9a9c9e]" />
            <div className="w-[5px] h-full bg-[#a9a9a9] flex items-center justify-center"><span className="w-px h-[7px] bg-black" /></div>
          </div>
          <SheetTabs />
        </main>
        <SideBar />
      </div>
      <StatusBar />
      <div className="absolute left-0 bottom-0 w-1 h-[37px] rounded-tr bg-[#2b3030]" />
    </div>
  );
}
